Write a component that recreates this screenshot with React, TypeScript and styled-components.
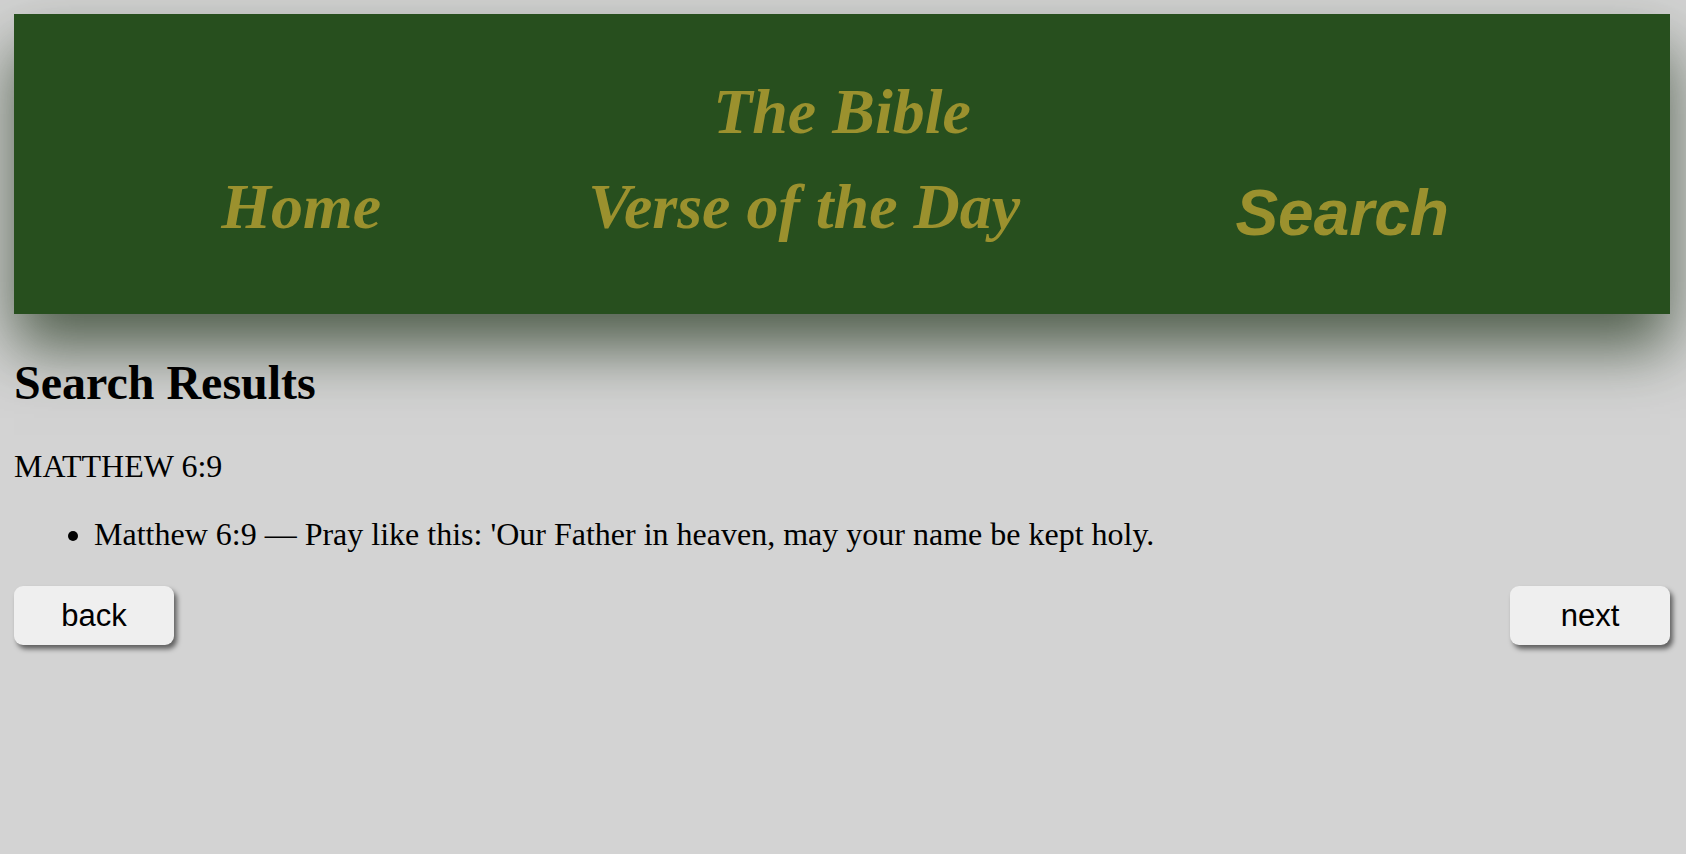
import React from 'react';
import styled, {createGlobalStyle} from 'styled-components';

const GlobalStyle = createGlobalStyle`
  html, body {
    margin: 0;
    padding: 0;
    background: #d3d3d3;
  }
  body {
    font-family: "Liberation Serif", "Times New Roman", serif;
    color: #000;
  }
`

const Page = styled.div`
  padding: 14px 16px 40px 14px;
  min-height: 800px;
`

const Header = styled.header`
  background: #274f1e;
  height: 300px;
  box-sizing: border-box;
  padding-top: 61px;
  box-shadow: 0 34px 58px rgba(25, 45, 20, 0.7);
  display: flex;
  flex-direction: column;
  align-items: stretch;
  gap: 21px;
`

const Title = styled.h1`
  margin: 0;
  text-align: center;
  font-size: 64px;
  font-weight: bold;
  font-style: italic;
  color: #9b912e;
  font-family: "Liberation Serif", "Times New Roman", serif;
`

const Nav = styled.nav`
  display: flex;
  justify-content: space-evenly;
  align-items: flex-start;
  padding: 0 14px 0 0;
`

const NavLink = styled.a<{$sans?: boolean}>`
  font-size: 64px;
  font-weight: bold;
  font-style: italic;
  color: #9b912e;
  text-decoration: none;
  cursor: pointer;
  font-family: ${p => p.$sans
    ? '"Liberation Sans", Arial, sans-serif'
    : '"Liberation Serif", "Times New Roman", serif'};
  margin-top: ${p => p.$sans ? '6px' : '0'};
  margin-left: ${p => p.$sans ? '8px' : '0'};
`

const Heading = styled.h2`
  font-size: 48px;
  font-weight: bold;
  margin: 41px 0 38px;
`

const Reference = styled.p`
  font-size: 32px;
  margin: 0 0 31px;
`

const Results = styled.ul`
  font-size: 32px;
  margin: 0 0 33px;
  padding-left: 80px;
`

const Pager = styled.div`
  display: flex;
  justify-content: space-between;
`

const PageButton = styled.button`
  width: 160px;
  height: 59px;
  border: none;
  border-radius: 9px;
  background: #efefef;
  color: #000;
  font-family: "Liberation Sans", Arial, sans-serif;
  font-size: 31px;
  padding-top: 2px;
  box-shadow: 3px 4px 5px rgba(0, 0, 0, 0.55);
  cursor: pointer;
`

const verses = [
  {ref: 'Matthew 6:9', text: "Pray like this: 'Our Father in heaven, may your name be kept holy."},
]

export default function App() {
  return (
    <Page>
      <GlobalStyle/>
      <Header>
        <Title>The Bible</Title>
        <Nav>
          <NavLink>Home</NavLink>
          <NavLink>Verse of the Day</NavLink>
          <NavLink $sans>Search</NavLink>
        </Nav>
      </Header>
      <Heading>Search Results</Heading>
      <Reference>MATTHEW 6:9</Reference>
      <Results>
        {verses.map(v => (
          <li key={v.ref}>{v.ref} — {v.text}</li>
        ))}
      </Results>
      <Pager>
        <PageButton>back</PageButton>
        <PageButton>next</PageButton>
      </Pager>
    </Page>
  )
}
